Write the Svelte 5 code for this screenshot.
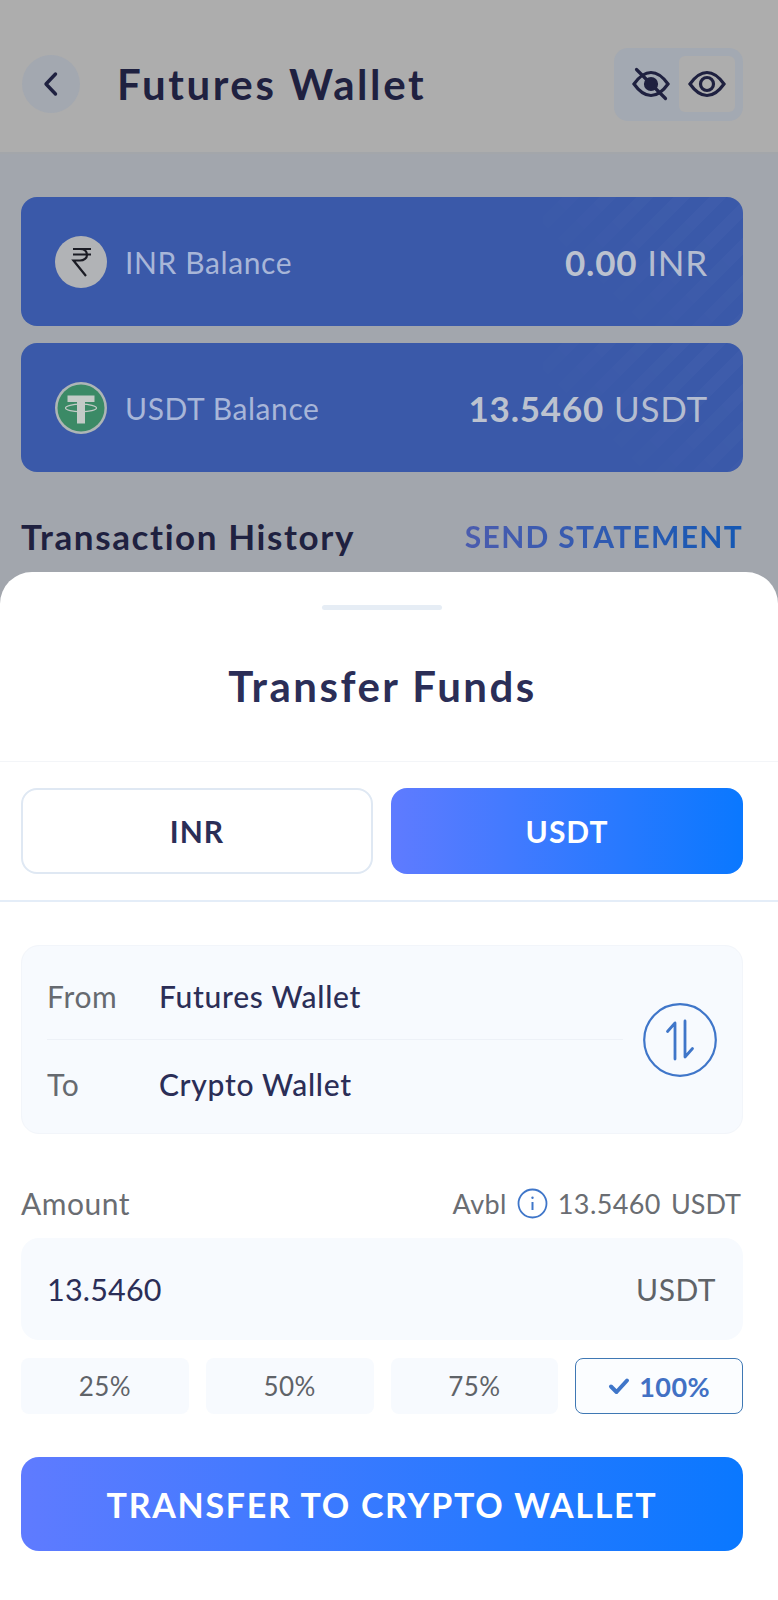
<script lang="ts">
  const balances = [
    { label: "INR Balance", value: "0.00", unit: "INR", icon: "inr" },
    { label: "USDT Balance", value: "13.5460", unit: "USDT", icon: "usdt" },
  ];
  const percents = ["25%", "50%", "75%"];
</script>

<div class="page">
  <header class="topbar">
    <button class="back" aria-label="Back">
      <svg width="18" height="26" viewBox="0 0 18 26" fill="none" stroke="currentColor" stroke-width="3.4" stroke-linecap="round" stroke-linejoin="round">
        <path d="M13.5 3 L4 13 L13.5 23" />
      </svg>
    </button>
    <h1>Futures Wallet</h1>
    <div class="toggle">
      <span class="seg">
        <svg width="38" height="36" viewBox="0 0 38 36" fill="none" stroke="currentColor" stroke-width="3.2" stroke-linecap="round">
          <path d="M2 18 C8 9.500 13 6.500 19 6.500 C25 6.500 30 9.500 36 18 C30 26.500 25 29.500 19 29.500 C13 29.500 8 26.500 2 18 Z" />
          <circle cx="19" cy="18" r="5.500" fill="currentColor" />
          <path d="M4.500 3.500 L33.500 32.500" />
        </svg>
      </span>
      <span class="seg active">
        <svg width="38" height="36" viewBox="0 0 38 36" fill="none" stroke="currentColor" stroke-width="3.2" stroke-linecap="round">
          <path d="M2 18 C8 9.500 13 6.500 19 6.500 C25 6.500 30 9.500 36 18 C30 26.500 25 29.500 19 29.500 C13 29.500 8 26.500 2 18 Z" />
          <circle cx="19" cy="18" r="6.500" />
        </svg>
      </span>
    </div>
  </header>

  <main class="content">
    {#each balances as b}
      <div class="balance">
        <div class="balance-left">
          {#if b.icon === "inr"}
            <svg class="coin" width="52" height="52" viewBox="0 0 52 52">
              <circle cx="26" cy="26" r="26" fill="#b1b3b6" />
              <path d="M18 13 H36 M18 18.500 H36 M25 13 C30 13 32 16 32 19 C32 22 29 24.500 25 24.500 H18.500 L31 40" fill="none" stroke="#1b1c24" stroke-width="2.200" />
            </svg>
          {:else}
            <svg class="coin" width="52" height="52" viewBox="0 0 52 52">
              <circle cx="26" cy="26" r="26" fill="#aeb6b6" />
              <circle cx="26" cy="26" r="23.500" fill="#3b8a66" />
              <path d="M12.500 13.500 H39.500 V20 H30 V41.500 H22 V20 H12.500 Z" fill="#c3cbc7" />
              <ellipse cx="26" cy="26" rx="15.500" ry="3.800" fill="none" stroke="#c3cbc7" stroke-width="1.200" />
            </svg>
          {/if}
          <span class="balance-label">{b.label}</span>
        </div>
        <span class="balance-value"><b>{b.value}</b> {b.unit}</span>
      </div>
    {/each}

    <div class="history">
      <h2>Transaction History</h2>
      <span class="send">SEND STATEMENT</span>
    </div>
  </main>

  <section class="sheet">
    <div class="handle"></div>
    <h3>Transfer Funds</h3>

    <div class="tabs">
      <button class="tab">INR</button>
      <button class="tab on">USDT</button>
    </div>

    <div class="body">
      <div class="route">
        <div class="route-rows">
          <div class="route-row"><span class="k">From</span><span class="v">Futures Wallet</span></div>
          <div class="route-row"><span class="k">To</span><span class="v">Crypto Wallet</span></div>
        </div>
        <button class="swap" aria-label="Swap">
          <svg width="74" height="74" viewBox="0 0 74 74" fill="none" stroke="#3f76c9" stroke-linecap="round" stroke-linejoin="round">
            <circle cx="37" cy="37" r="35.800" stroke-width="2.200" />
            <path d="M32 56 V20 L24.500 28.500 M42 18 V54 L49.500 45.500" stroke-width="2.800" />
          </svg>
        </button>
      </div>

      <div class="amount-head">
        <span class="amount-label">Amount</span>
        <span class="avbl">
          Avbl
          <svg width="31" height="31" viewBox="0 0 31 31" fill="none" stroke="#3f76c9">
            <circle cx="15.500" cy="15.500" r="14" stroke-width="1.800" />
            <path d="M15.500 14 V22" stroke-width="2" />
            <circle cx="15.500" cy="9.800" r="1.200" fill="#3f76c9" stroke="none" />
          </svg>
          <span>13.5460</span>
          <span class="avbl-unit">USDT</span>
        </span>
      </div>

      <div class="amount">
        <span class="amount-val">13.5460</span>
        <span class="amount-unit">USDT</span>
      </div>

      <div class="percents">
        {#each percents as p}
          <button class="pct">{p}</button>
        {/each}
        <button class="pct sel">
          <svg width="22" height="18" viewBox="0 0 22 18" fill="none" stroke="#3f76c9" stroke-width="4" stroke-linecap="round" stroke-linejoin="round">
            <path d="M3 9.500 L8.500 15 L19 3.500" />
          </svg>
          100%
        </button>
      </div>

      <button class="submit">TRANSFER TO CRYPTO WALLET</button>
    </div>
  </section>
</div>

<style>
  :global(body) {
    margin: 0;
    background: #fff;
  }
  .page {
    position: relative;
    width: 778px;
    height: 1600px;
    overflow: hidden;
    font-family: Lato, "Open Sans", sans-serif;
    /* colours of the page under the sheet are already dimmed */
    background: #a2a6ad;
    color: #1f2140;
  }
  button {
    font-family: inherit;
    border: 0;
    padding: 0;
    cursor: pointer;
  }

  .topbar {
    display: flex;
    align-items: center;
    height: 154px;
    box-sizing: border-box;
    padding: 0 35px 0 22px;
    background: #adadad;
    border-bottom: 2px solid #a3a6aa;
  }
  .back {
    width: 58px;
    height: 58px;
    border-radius: 50%;
    background: #a3a8b0;
    color: #1f2140;
    display: flex;
    align-items: center;
    justify-content: center;
    margin-right: 37px;
    margin-top: 16px;
  }
  h1 {
    flex: 1;
    margin: 16px 0 0;
    font-size: 42px;
    font-weight: 700;
    letter-spacing: 2.600px;
    color: #1f2140;
  }
  .toggle {
    display: flex;
    align-items: center;
    width: 129px;
    height: 73px;
    box-sizing: border-box;
    padding: 0 8px 0 9px;
    margin-top: 16px;
    border-radius: 14px;
    background: #a3a9b2;
    justify-content: space-between;
  }
  .seg {
    width: 56px;
    height: 56px;
    display: flex;
    align-items: center;
    justify-content: center;
    border-radius: 6px;
    color: #1f2140;
  }
  .seg.active {
    background: #adadad;
  }

  .content {
    padding: 43px 35px 0 21px;
    display: flex;
    flex-direction: column;
    gap: 17px;
  }
  .balance {
    position: relative;
    overflow: hidden;
    height: 129px;
    box-sizing: border-box;
    padding: 0 35px 0 34px;
    display: flex;
    align-items: center;
    justify-content: space-between;
    border-radius: 16px;
    background: #3a59a9;
  }
  .balance::after {
    content: "";
    position: absolute;
    top: 0;
    right: 0;
    width: 200px;
    height: 129px;
    background: repeating-linear-gradient(135deg, transparent 0 14px, rgba(255, 255, 255, 0.025) 14px 26px);
    -webkit-mask-image: linear-gradient(225deg, #000 20%, transparent 85%);
    mask-image: linear-gradient(225deg, #000 20%, transparent 85%);
  }
  .balance-left {
    display: flex;
    align-items: center;
    gap: 18px;
  }
  .balance-label {
    font-size: 30px;
    letter-spacing: 0.600px;
    color: #a8b6d8;
  }
  .balance-value {
    font-size: 35px;
    letter-spacing: 0.800px;
    color: #b4bcd0;
  }
  .balance-value b {
    font-weight: 700;
    color: #bcc2cf;
  }

  .history {
    display: flex;
    align-items: center;
    justify-content: space-between;
    margin-top: 26px;
  }
  h2 {
    margin: 0;
    font-size: 35px;
    font-weight: 700;
    letter-spacing: 1.600px;
    color: #1f2140;
  }
  .send {
    font-size: 30px;
    font-weight: 700;
    letter-spacing: 1.300px;
    background: linear-gradient(90deg, #4b5cae, #1458b4);
    -webkit-background-clip: text;
    background-clip: text;
    color: transparent;
  }

  .sheet {
    position: absolute;
    left: 0;
    right: 0;
    top: 572px;
    bottom: 0;
    background: #fff;
    border-radius: 32px 32px 0 0;
  }
  .handle {
    width: 120px;
    height: 5px;
    border-radius: 3px;
    background: #e6edf5;
    margin: 33px 0 0 322px;
  }
  h3 {
    margin: 0;
    height: 152px;
    display: flex;
    align-items: center;
    justify-content: center;
    font-size: 42px;
    font-weight: 700;
    letter-spacing: 2.500px;
    color: #2b2e57;
    border-bottom: 1px solid #f3f5f8;
    box-sizing: border-box;
    padding: 0 13px 0 0;
  }
  .tabs {
    display: grid;
    grid-template-columns: 1fr 1fr;
    gap: 18px;
    padding: 26px 35px 26px 21px;
    border-bottom: 2px solid #e4edf8;
  }
  .tab {
    height: 86px;
    border-radius: 16px;
    font-size: 30px;
    font-weight: 700;
    letter-spacing: 1px;
    background: #fff;
    color: #2b2e57;
    border: 2px solid #dfe8f3;
  }
  .tab.on {
    color: #fff;
    border: 0;
    background: linear-gradient(90deg, #5f7bff, #0a78ff);
  }

  .body {
    padding: 43px 35px 0 21px;
  }
  .route {
    height: 189px;
    box-sizing: border-box;
    border-radius: 18px;
    background: #f7fafe;
    border: 1px solid #f2f5fa;
    padding: 0 25px;
    display: flex;
    align-items: center;
  }
  .route-rows {
    width: 578px;
  }
  .route-row {
    height: 87px;
    display: flex;
    align-items: center;
    font-size: 30px;
    letter-spacing: 0.700px;
  }
  .route-row + .route-row {
    border-top: 1px solid #edf1f7;
  }
  .k {
    width: 112px;
    color: #666a70;
  }
  .v {
    font-weight: 500;
    color: #2b2e57;
  }
  .swap {
    background: none;
    display: flex;
    margin-left: 20px;
  }

  .amount-head {
    display: flex;
    align-items: center;
    justify-content: space-between;
    margin-top: 50px;
    height: 38px;
  }
  .amount-label {
    font-size: 30px;
    letter-spacing: 0.500px;
    color: #6a6d72;
  }
  .avbl {
    display: flex;
    align-items: center;
    gap: 10px;
    font-size: 27px;
    letter-spacing: 0.400px;
    color: #6a6d72;
  }
  .avbl-unit {
    letter-spacing: 0;
    margin-right: 2px;
  }
  .amount {
    margin-top: 16px;
    height: 102px;
    box-sizing: border-box;
    padding: 0 27px 0 26px;
    border-radius: 18px;
    background: #f7fafe;
    display: flex;
    align-items: center;
    justify-content: space-between;
    font-size: 30px;
  }
  .amount-val {
    color: #2b2e57;
    font-size: 30.500px;
    letter-spacing: 0.200px;
  }
  .amount-unit {
    color: #5f6368;
    letter-spacing: 0.500px;
  }
  .percents {
    display: grid;
    grid-template-columns: repeat(4, 1fr);
    gap: 17px;
    margin-top: 18px;
  }
  .pct {
    height: 56px;
    border-radius: 8px;
    background: #f7fafe;
    color: #5f6368;
    font-size: 26px;
    letter-spacing: 0.400px;
  }
  .pct.sel {
    display: flex;
    align-items: center;
    justify-content: center;
    gap: 9px;
    background: #fbfdff;
    border: 1.500px solid #3f78b4;
    color: #4271c4;
    font-size: 27px;
    font-weight: 700;
  }
  .submit {
    display: block;
    width: 100%;
    height: 94px;
    margin-top: 43px;
    border-radius: 18px;
    color: #fff;
    font-size: 34px;
    font-weight: 700;
    letter-spacing: 1.700px;
    background: linear-gradient(90deg, #5f7bff, #0a78ff);
  }
</style>
